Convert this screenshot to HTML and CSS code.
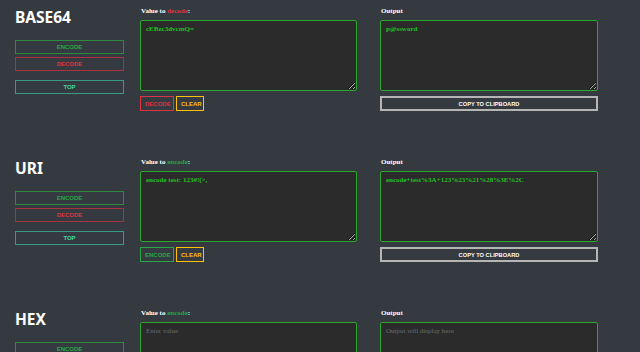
FILE: index.html
```html
<!DOCTYPE html>
<html lang="en">
<head>
    <meta charset="UTF-8">
    <meta name="viewport" content="width=device-width, initial-scale=1.0">
    <title>Encoders</title>
    <link rel="stylesheet" href="styles.css">
</head>
<body>

<div class="section" id="base64">
    <div class="side">
        <h2>BASE64</h2>
        <button class="nav-btn green">Encode</button>
        <button class="nav-btn red">Decode</button>
        <button class="nav-btn teal top-btn">Top</button>
    </div>
    <div class="input-col">
        <label>Value to <span class="red-text">decode</span>:</label>
        <textarea placeholder="Enter value">cEBzc3dvcmQ=</textarea>
        <div class="actions">
            <button class="small-btn red">Decode</button>
            <button class="small-btn yellow">Clear</button>
        </div>
    </div>
    <div class="output-col">
        <label>Output</label>
        <textarea placeholder="Output will display here">p@ssword</textarea>
        <button class="copy-btn">Copy to clipboard</button>
    </div>
</div>

<div class="section" id="uri">
    <div class="side">
        <h2>URI</h2>
        <button class="nav-btn green">Encode</button>
        <button class="nav-btn red">Decode</button>
        <button class="nav-btn teal top-btn">Top</button>
    </div>
    <div class="input-col">
        <label>Value to <span class="green-text">encode</span>:</label>
        <textarea placeholder="Enter value">encode test: 123#!(&gt;,</textarea>
        <div class="actions">
            <button class="small-btn green">Encode</button>
            <button class="small-btn yellow">Clear</button>
        </div>
    </div>
    <div class="output-col">
        <label>Output</label>
        <textarea placeholder="Output will display here">encode+test%3A+123%23%21%28%3E%2C</textarea>
        <button class="copy-btn">Copy to clipboard</button>
    </div>
</div>

<div class="section" id="hex">
    <div class="side">
        <h2>HEX</h2>
        <button class="nav-btn green">Encode</button>
        <button class="nav-btn red">Decode</button>
        <button class="nav-btn teal top-btn">Top</button>
    </div>
    <div class="input-col">
        <label>Value to <span class="green-text">encode</span>:</label>
        <textarea placeholder="Enter value"></textarea>
        <div class="actions">
            <button class="small-btn green">Encode</button>
            <button class="small-btn yellow">Clear</button>
        </div>
    </div>
    <div class="output-col">
        <label>Output</label>
        <textarea placeholder="Output will display here"></textarea>
        <button class="copy-btn">Copy to clipboard</button>
    </div>
</div>

</body>
</html>
```
FILE: styles.css
```css
body {
    margin: 0;
    background-color: #343a40;
    font-family: 'Liberation Serif', serif;
    color: #ffffff;
    overflow: hidden;
}
.section {
    display: flex;
    height: 151px;
    padding: 6px 0 0 15px;
    box-sizing: border-box;
}
.side {
    width: 109px;
    display: flex;
    flex-direction: column;
}
h2 {
    margin: 0 0 11px 0;
    height: 23px;
    font-family: 'Noto Sans', sans-serif;
    font-size: 15.5px;
    line-height: 22px;
    font-weight: 700;
    color: #ffffff;
}
button {
    font-family: 'Liberation Sans', sans-serif;
    font-weight: bold;
    font-size: 6px;
    text-transform: uppercase;
    background-color: transparent;
    cursor: pointer;
    padding: 0;
    box-sizing: border-box;
}
.nav-btn {
    width: 109px;
    height: 14px;
    margin-bottom: 3px;
    border: 1px solid;
}
.top-btn {
    margin-top: 6px;
}
.green {
    color: #28a745;
    border-color: #2d8a3e;
}
.red {
    color: #dc3545;
    border-color: #a8323f;
}
.teal {
    color: #3fdc9e;
    border-color: #3a9a80;
}
.yellow {
    color: #ffc107;
    border-color: #c99a22;
}
.red-text {
    color: #dc3545;
}
.green-text {
    color: #28a745;
}
.input-col {
    width: 217px;
    margin-left: 16px;
}
.output-col {
    width: 218px;
    margin-left: 23px;
}
label {
    display: block;
    font-size: 7px;
    font-weight: bold;
    line-height: 11px;
    height: 11px;
    margin: 0 0 3px 1px;
}
textarea {
    display: block;
    width: 100%;
    height: 71px;
    box-sizing: border-box;
    background-color: #2b2b2b;
    border: 1px solid #2aa82a;
    border-radius: 2px;
    color: #22c022;
    font-family: 'Liberation Serif', serif;
    font-size: 7px;
    font-weight: bold;
    padding: 4px 5px;
    margin: 0;
    outline: none;
}
textarea::placeholder {
    color: #6c6c6c;
    font-weight: normal;
}
.actions {
    display: flex;
    gap: 2px;
    margin-top: 5px;
}
.small-btn {
    height: 15px;
    border: 1px solid;
    padding: 0 4px;
}
.small-btn.red {
    width: 34px;
}
.small-btn.green {
    width: 34px;
}
.small-btn.yellow {
    width: 28px;
}
.copy-btn {
    display: block;
    width: 100%;
    height: 15px;
    margin-top: 5px;
    border: 2px solid #b5b5b5;
    color: #ffffff;
    font-size: 5.7px;
}
```
